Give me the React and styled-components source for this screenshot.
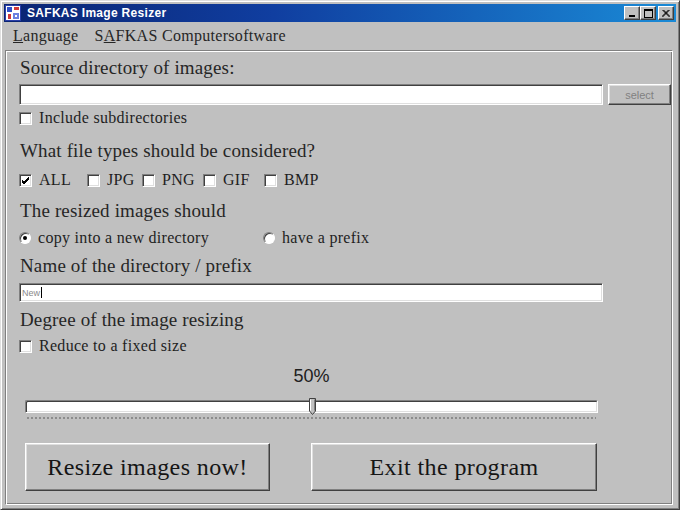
import React from 'react';
import styled, { createGlobalStyle } from 'styled-components';

const serif = `"Liberation Serif", "Times New Roman", serif`;
const sans = `"Liberation Sans", Arial, sans-serif`;

const GlobalStyle = createGlobalStyle`
    html, body {
        margin: 0;
        padding: 0;
        background: #c0c0c0;
    }
    * {
        box-sizing: border-box;
    }
`;

const Window = styled.div`
    width: 680px;
    height: 510px;
    display: flex;
    flex-direction: column;
    background: #c0c0c0;
    border: 1px solid;
    border-color: #dfdfdf #404040 #404040 #dfdfdf;
    box-shadow: inset 1px 1px #ffffff, inset -1px -1px #808080;
    padding: 3px;
    font-family: ${serif};
    color: #1e1e1e;
`;

const TitleBar = styled.div`
    height: 18px;
    display: flex;
    align-items: center;
    padding: 0 2px 0 1px;
    background: linear-gradient(to right, #0a2472 0%, #103ea0 40%, #1a8ad6 100%);
`;

const TitleText = styled.span`
    margin-left: 6px;
    font-family: ${sans};
    font-weight: bold;
    font-size: 12px;
    color: #ffffff;
    letter-spacing: 0.3px;
`;

const Controls = styled.div`
    margin-left: auto;
    display: flex;
    align-items: center;
`;

const ControlButton = styled.div`
    width: 16px;
    height: 14px;
    margin-left: ${props => props.$gap || 0}px;
    display: flex;
    align-items: center;
    justify-content: center;
    background: #c0c0c0;
    border: 1px solid;
    border-color: #ffffff #404040 #404040 #ffffff;
    box-shadow: inset -1px -1px #808080;
`;

const MenuBar = styled.div`
    height: 28px;
    display: flex;
    align-items: center;
    padding-left: 9px;
    font-size: 16px;
    letter-spacing: 0.3px;
`;

const MenuItem = styled.span`
    margin-right: 16px;
    color: #262626;
    u {
        text-decoration-thickness: 1px;
    }
`;

const Panel = styled.div`
    flex: 1;
    margin: 0 3px 1px 1px;
    padding: 5px 0 0 13px;
    border: 1px solid;
    border-color: #808080 #ffffff #ffffff #808080;
    box-shadow: inset 1px 1px #ffffff, inset -1px -1px #808080;
    display: flex;
    flex-direction: column;
`;

const Label = styled.div`
    margin-top: ${props => props.$mt || 0}px;
    height: 24px;
    line-height: 24px;
    font-size: 19px;
    letter-spacing: 0.15px;
    padding-left: 1px;
    color: #262626;
    white-space: nowrap;
`;

const Row = styled.div`
    margin-top: ${props => props.$mt || 0}px;
    height: ${props => props.$h || 20}px;
    display: flex;
    align-items: center;
`;

const TextInput = styled.div`
    width: 584px;
    height: 100%;
    background: #ffffff;
    border: 1px solid;
    border-color: #808080 #ffffff #ffffff #808080;
    box-shadow: inset 1px 1px #404040, inset -1px -1px #dfdfdf;
    padding-left: 2px;
    display: flex;
    align-items: center;
    font-family: ${sans};
    font-size: 9px;
    color: #8a8a8a;
`;

const Caret = styled.span`
    display: inline-block;
    width: 1px;
    height: 11px;
    margin-left: 1px;
    background: #000000;
`;

const SmallButton = styled.div`
    width: 63px;
    height: 100%;
    margin-left: 5px;
    display: flex;
    align-items: center;
    justify-content: center;
    background: #c0c0c0;
    border: 1px solid;
    border-color: #ffffff #404040 #404040 #ffffff;
    box-shadow: inset -1px -1px #808080, inset 1px 1px #dfdfdf;
    font-family: ${sans};
    font-size: 11px;
    color: #808080;
`;

const Option = styled.div`
    display: flex;
    align-items: center;
    width: ${props => (props.$w ? `${props.$w}px` : 'auto')};
    font-size: 16px;
    letter-spacing: 0.3px;
    color: #1e1e1e;
    white-space: nowrap;
`;

const Box = styled.div`
    width: 13px;
    height: 13px;
    margin-right: 7px;
    flex-shrink: 0;
    display: flex;
    align-items: center;
    justify-content: center;
    background: #ffffff;
    border: 1px solid;
    border-color: #808080 #ffffff #ffffff #808080;
    box-shadow: inset 1px 1px #404040, inset -1px -1px #dfdfdf;
`;

const RadioDot = styled.div`
    width: 12px;
    height: 12px;
    margin-right: 7px;
    flex-shrink: 0;
    border-radius: 50%;
    display: flex;
    align-items: center;
    justify-content: center;
    background: #ffffff;
    border: 1px solid;
    border-color: #808080 #ffffff #ffffff #808080;
    box-shadow: inset 1px 1px #404040;
    &::after {
        content: '';
        width: 4px;
        height: 4px;
        border-radius: 50%;
        background: ${props => (props.$on ? '#000000' : 'transparent')};
    }
`;

const SliderArea = styled.div`
    width: 573px;
    margin-left: 6px;
    display: flex;
    flex-direction: column;
`;

const Percent = styled.div`
    margin-top: 10px;
    height: 20px;
    line-height: 20px;
    text-align: center;
    font-family: ${sans};
    font-size: 18px;
    color: #202020;
`;

const Track = styled.div`
    position: relative;
    margin-top: 14px;
    height: 13px;
    background: #ffffff;
    border: 1px solid;
    border-color: #808080 #ffffff #ffffff #808080;
    box-shadow: inset 1px 1px #404040, inset -1px -1px #dfdfdf;
    border-radius: 2px 2px 0 0;
`;

const Thumb = styled.svg`
    position: absolute;
    top: -3px;
    margin-left: -3px;
`;

const Ticks = styled.div`
    margin: 4px 2px 0 2px;
    height: 2px;
    background: repeating-linear-gradient(
        to right,
        #8c8c8c 0,
        #8c8c8c 2px,
        transparent 2px,
        transparent 4px
    );
`;

const ButtonRow = styled.div`
    margin-top: 24px;
    margin-left: 6px;
    display: flex;
    gap: 41px;
`;

const BigButton = styled.div`
    width: ${props => props.$w}px;
    height: 48px;
    display: flex;
    align-items: center;
    justify-content: center;
    background: #c0c0c0;
    border: 1px solid;
    border-color: #ffffff #404040 #404040 #ffffff;
    box-shadow: inset -1px -1px #808080, inset 1px 1px #dfdfdf;
    font-size: 24px;
    letter-spacing: 0.4px;
    color: #151515;
`;

function CheckOption({ label, checked, width }) {
    return (
        <Option $w={width}>
            <Box>
                {checked && (
                    <svg width="9" height="9" viewBox="0 0 9 9">
                        <path d="M1 4 L3 6 L8 1 M1 5 L3 7 L8 2 M1 6 L3 8 L8 3" stroke="#000" strokeWidth="1" fill="none" />
                    </svg>
                )}
            </Box>
            {label}
        </Option>
    );
}

function RadioOption({ label, on, width }) {
    return (
        <Option $w={width}>
            <RadioDot $on={on} />
            {label}
        </Option>
    );
}

function AppIcon() {
    return (
        <svg width="16" height="16" viewBox="0 0 16 16">
            <rect x="0.5" y="0.5" width="15" height="15" fill="#ffffff" stroke="#2a3fa8" />
            <rect x="2" y="2" width="5" height="5" fill="#3050c8" />
            <rect x="9" y="2" width="5" height="3" fill="#d03838" />
            <rect x="3" y="9" width="3" height="5" fill="#d03838" />
            <rect x="8" y="8" width="6" height="6" fill="#6a80e0" />
            <rect x="10" y="10" width="2" height="2" fill="#ffffff" />
        </svg>
    );
}

export default function App() {
    const value = 50;
    return (
        <>
            <GlobalStyle />
            <Window>
                <TitleBar>
                    <AppIcon />
                    <TitleText>SAFKAS Image Resizer</TitleText>
                    <Controls>
                        <ControlButton>
                            <svg width="8" height="8" viewBox="0 0 8 8">
                                <rect x="1" y="6" width="6" height="2" fill="#000" />
                            </svg>
                        </ControlButton>
                        <ControlButton>
                            <svg width="9" height="9" viewBox="0 0 9 9">
                                <rect x="0.5" y="0.5" width="8" height="8" fill="none" stroke="#000" />
                                <rect x="0" y="0" width="9" height="2" fill="#000" />
                            </svg>
                        </ControlButton>
                        <ControlButton $gap={2}>
                            <svg width="8" height="7" viewBox="0 0 8 7">
                                <path d="M0.5 0 L7.5 7 M1.5 0 L8 6.5 M7.5 0 L0.5 7 M6.5 0 L0 6.5" stroke="#000" strokeWidth="1" />
                            </svg>
                        </ControlButton>
                    </Controls>
                </TitleBar>
                <MenuBar>
                    <MenuItem>
                        <u>L</u>anguage
                    </MenuItem>
                    <MenuItem>
                        S<u>A</u>FKAS Computersoftware
                    </MenuItem>
                </MenuBar>
                <Panel>
                    <Label>Source directory of images:</Label>
                    <Row $mt={4} $h={21}>
                        <TextInput />
                        <SmallButton>select</SmallButton>
                    </Row>
                    <Row $mt={3}>
                        <CheckOption label="Include subdirectories" />
                    </Row>
                    <Label $mt={11}>What file types should be considered?</Label>
                    <Row $mt={7}>
                        <CheckOption label="ALL" checked width={68} />
                        <CheckOption label="JPG" width={55} />
                        <CheckOption label="PNG" width={61} />
                        <CheckOption label="GIF" width={61} />
                        <CheckOption label="BMP" />
                    </Row>
                    <Label $mt={9}>The resized images should</Label>
                    <Row $mt={5}>
                        <RadioOption label="copy into a new directory" on width={244} />
                        <RadioOption label="have a prefix" />
                    </Row>
                    <Label $mt={6}>Name of the directory / prefix</Label>
                    <Row $mt={5} $h={19}>
                        <TextInput>
                            New
                            <Caret />
                        </TextInput>
                    </Row>
                    <Label $mt={6}>Degree of the image resizing</Label>
                    <Row $mt={4}>
                        <CheckOption label="Reduce to a fixed size" />
                    </Row>
                    <SliderArea>
                        <Percent>{value}%</Percent>
                        <Track>
                            <Thumb
                                width="7"
                                height="17"
                                viewBox="0 0 7 17"
                                style={{ left: `${value}%` }}
                            >
                                <path d="M0.5 0.5 H6.5 V13 L3.5 16.5 L0.5 13 Z" fill="#c0c0c0" stroke="#404040" />
                                <path d="M1.5 1.5 V12.6" stroke="#ffffff" />
                                <path d="M5.5 1.5 V12.6" stroke="#808080" />
                            </Thumb>
                        </Track>
                        <Ticks />
                    </SliderArea>
                    <ButtonRow>
                        <BigButton $w={245}>Resize images now!</BigButton>
                        <BigButton $w={286}>Exit the program</BigButton>
                    </ButtonRow>
                </Panel>
            </Window>
        </>
    );
}
